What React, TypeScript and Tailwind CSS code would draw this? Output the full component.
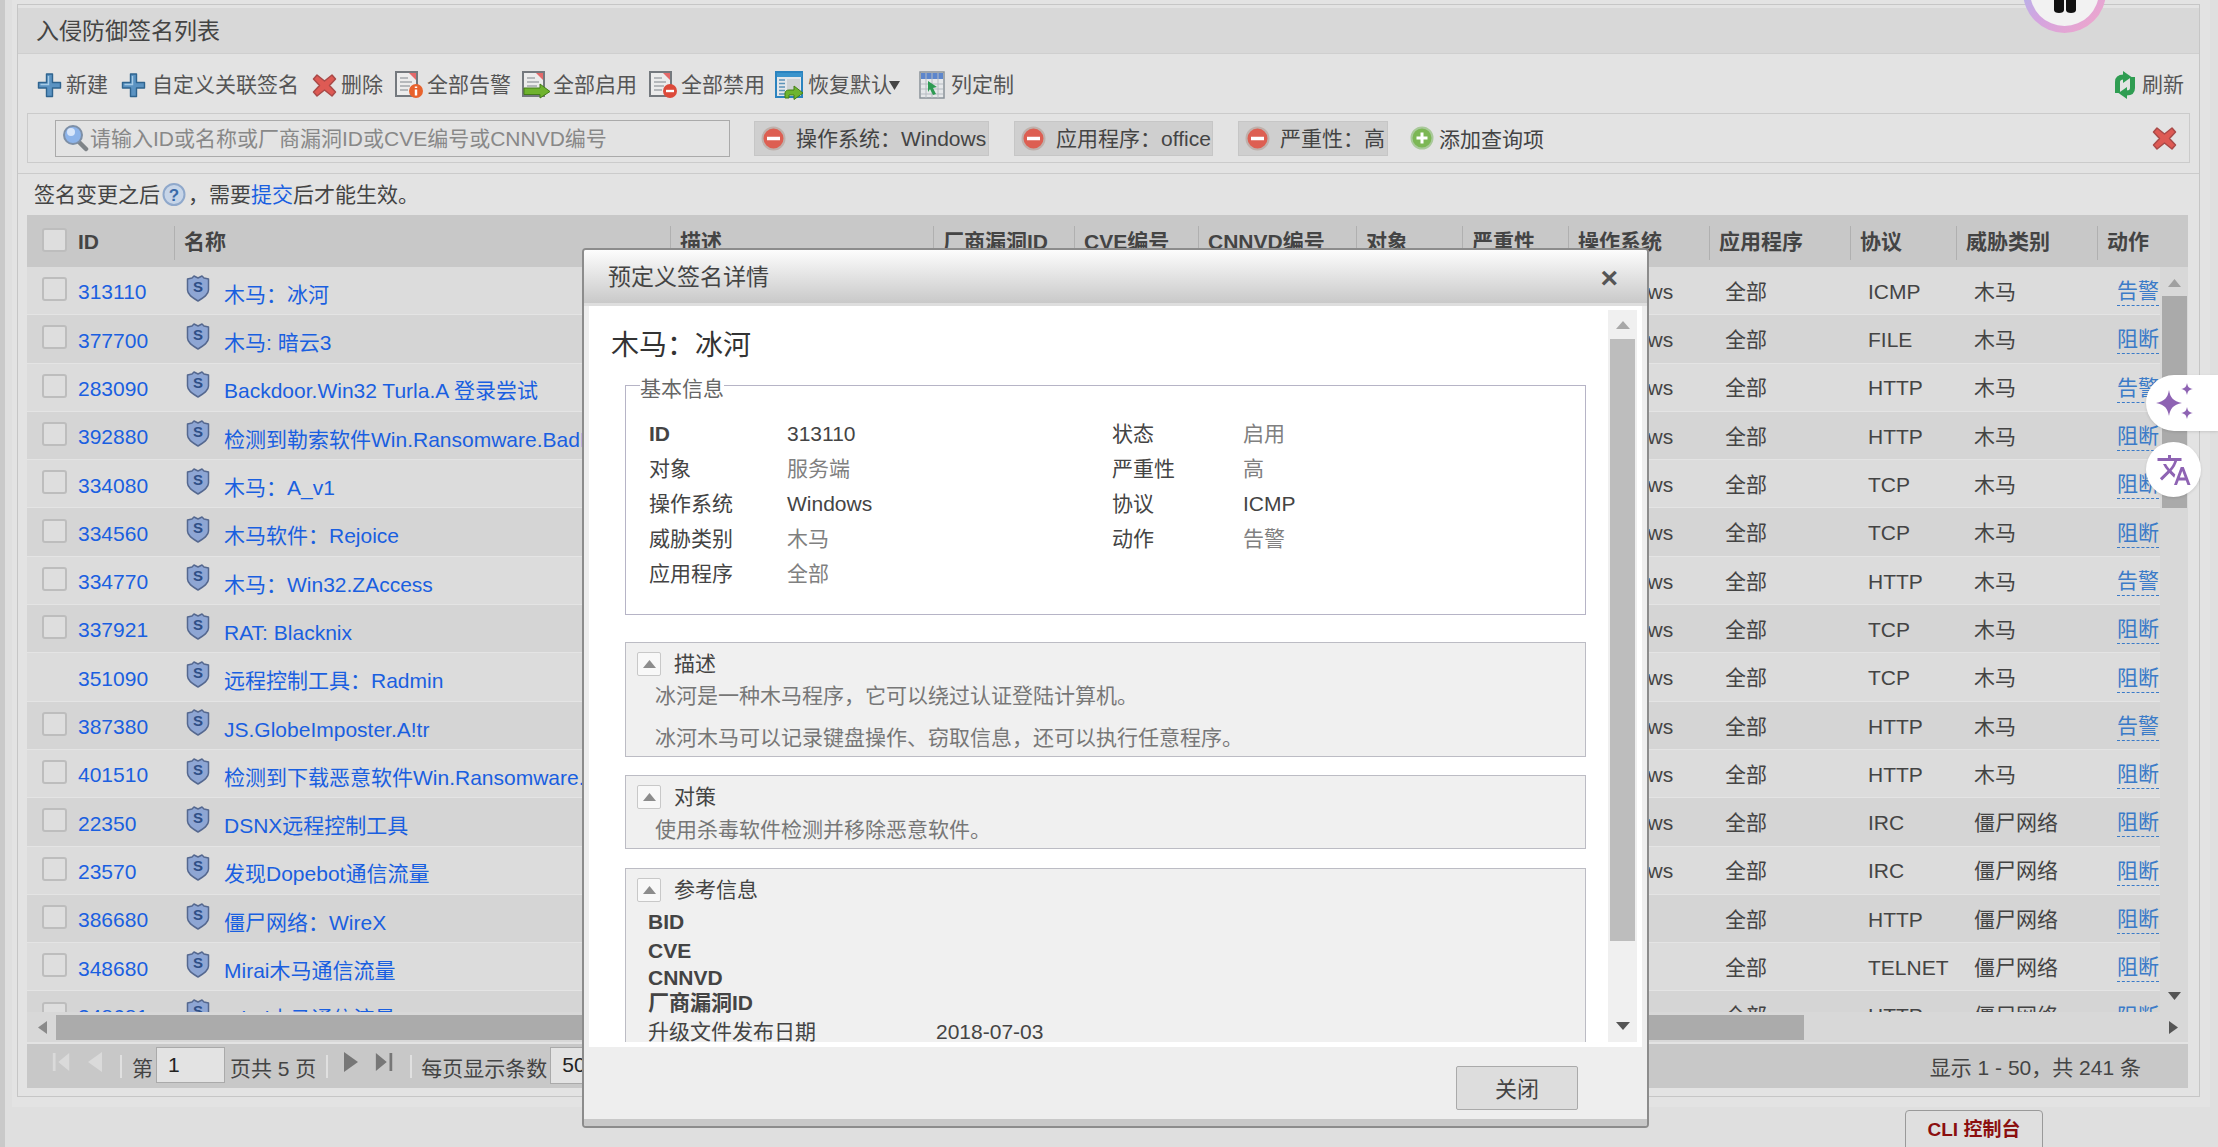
const columns = "grid-cols-[147px_496px_263px_141px_124px_158px_106px_106px_141px_141px_106px_141px_63px]";

const headers = ["名称", "描述", "厂商漏洞ID", "CVE编号", "CNNVD编号", "对象", "严重性", "操作系统", "应用程序", "协议", "威胁类别", "动作"];

type Row = { id: string; name: string; os: string; proto: string; kind: string; action: string; noCheck?: boolean };

const rows: Row[] = [
  { id: "313110", name: "木马：冰河", os: "Windows", proto: "ICMP", kind: "木马", action: "告警" },
  { id: "377700", name: "木马: 暗云3", os: "Windows", proto: "FILE", kind: "木马", action: "阻断" },
  { id: "283090", name: "Backdoor.Win32 Turla.A 登录尝试", os: "Windows", proto: "HTTP", kind: "木马", action: "告警" },
  { id: "392880", name: "检测到勒索软件Win.Ransomware.BadRabbit", os: "Windows", proto: "HTTP", kind: "木马", action: "阻断" },
  { id: "334080", name: "木马：A_v1", os: "Windows", proto: "TCP", kind: "木马", action: "阻断" },
  { id: "334560", name: "木马软件：Rejoice", os: "Windows", proto: "TCP", kind: "木马", action: "阻断" },
  { id: "334770", name: "木马：Win32.ZAccess", os: "Windows", proto: "HTTP", kind: "木马", action: "告警" },
  { id: "337921", name: "RAT: Blacknix", os: "Windows", proto: "TCP", kind: "木马", action: "阻断" },
  { id: "351090", name: "远程控制工具：Radmin", os: "Windows", proto: "TCP", kind: "木马", action: "阻断", noCheck: true },
  { id: "387380", name: "JS.GlobeImposter.A!tr", os: "Windows", proto: "HTTP", kind: "木马", action: "告警" },
  { id: "401510", name: "检测到下载恶意软件Win.Ransomware.Locky", os: "Windows", proto: "HTTP", kind: "木马", action: "阻断" },
  { id: "22350", name: "DSNX远程控制工具", os: "Windows", proto: "IRC", kind: "僵尸网络", action: "阻断" },
  { id: "23570", name: "发现Dopebot通信流量", os: "Windows", proto: "IRC", kind: "僵尸网络", action: "阻断" },
  { id: "386680", name: "僵尸网络：WireX", os: "Linux", proto: "HTTP", kind: "僵尸网络", action: "阻断" },
  { id: "348680", name: "Mirai木马通信流量", os: "Linux", proto: "TELNET", kind: "僵尸网络", action: "阻断" },
  { id: "348681", name: "Mirai木马通信流量", os: "Linux", proto: "HTTP", kind: "僵尸网络", action: "阻断" },
];

function PlusIcon() {
  return (
    <svg width="25" height="26" viewBox="0 0 25 26" className="shrink-0">
      <path d="M9.500 2h6v8.500H23.500v5.500H15.500v8.500h-6V16H1.500v-5.500H9.500z" fill="#5b93c2" stroke="#2f648f" strokeWidth="1.400" strokeLinejoin="round" />
      <path d="M11.500 4v8.500h-8" fill="none" stroke="#a6cbe6" strokeWidth="1.400" />
    </svg>
  );
}

function RedX({ size = 25 }: { size?: number }) {
  return (
    <svg width={size} height={size} viewBox="0 0 25 25" className="shrink-0">
      <path d="M5 2 12.500 8 20 2l3.500 4-6 6.500 6 6.500-3.500 4-7.500-6-7.500 6-3.500-4 6-6.500-6-6.500z" fill="#de5a54" stroke="#a94a48" strokeWidth="1.500" strokeLinejoin="round" />
    </svg>
  );
}

function DocIcon({ badge }: { badge: "info" | "arrow" | "minus" }) {
  return (
    <svg width="29" height="28" viewBox="0 0 29 28" className="shrink-0">
      <path d="M1 1h21v24H1z" fill="#ececec" stroke="#74797e" strokeWidth="2" />
      <path d="M14 2h7v7z" fill="#e4696a" />
      <path d="M5 7h8M5 11h12M5 15h10M5 19h8" stroke="#a2a6aa" strokeWidth="1.500" />
      {badge === "info" && (
        <>
          <circle cx="21" cy="20" r="7" fill="#e8622c" />
          <path d="M21 15.500v1.600M21 18.500v6" stroke="#fff" strokeWidth="2.400" />
        </>
      )}
      {badge === "minus" && (
        <>
          <circle cx="21" cy="20" r="7" fill="#dc4a3a" />
          <path d="M17 20h8" stroke="#fff" strokeWidth="2.400" />
        </>
      )}
      {badge === "arrow" && <path d="M2 17h16v-4l10 7.500-10 6.500v-3.500H2z" fill="#6fb32e" stroke="#447d1a" strokeWidth="1" />}
    </svg>
  );
}

function RestoreIcon() {
  return (
    <svg width="29" height="29" viewBox="0 0 29 29" className="shrink-0">
      <path d="M1 1h26v25H1z" fill="#e4e7ea" stroke="#2a83bf" strokeWidth="2" />
      <path d="M2 2h25v4H2z" fill="#3a94cc" />
      <path d="M4 9h6M4 12.500h6M4 16h6M4 19.500h6M4 23h6" stroke="#5c93b8" strokeWidth="1.600" />
      <path d="M12 8h13v14H12z" fill="#cfd2d5" />
      <path d="M10 27v-5c0-2 2-3 4-3h5v-4l9 7-9 6.500V24h-5v3z" fill="#6db52f" stroke="#437f17" strokeWidth="1" />
    </svg>
  );
}

function ColumnIcon() {
  return (
    <svg width="26" height="29" viewBox="0 0 26 29" className="shrink-0">
      <path d="M1 1h24v26H1z" fill="#e6e8ea" stroke="#8b9299" strokeWidth="1.500" />
      <path d="M2 2h22v6H2z" fill="#5d86cc" />
      <path d="M7 2v25M13 2v25M19 2v25M2 13h22M2 18h22M2 23h22" stroke="#b6bcc2" strokeWidth="1" />
      <path d="M9 10l9 6-4 1 3 6-3 1-3-6-2 3z" fill="#2e9b53" />
    </svg>
  );
}

function RefreshIcon() {
  return (
    <svg width="24" height="28" viewBox="0 0 24 28" className="shrink-0">
      <path d="M4.500 22V11c0-3 2-5 6-5" fill="none" stroke="#2f9d52" strokeWidth="5" />
      <path d="M10 0l8.500 6-8.500 6z" fill="#2f9d52" />
      <path d="M19.500 6v11c0 3-2 5-6 5" fill="none" stroke="#2f9d52" strokeWidth="5" />
      <path d="M14 16l-8.500 6 8.500 6z" fill="#2f9d52" />
    </svg>
  );
}

function SearchIcon() {
  return (
    <svg width="27" height="28" viewBox="0 0 27 28" className="shrink-0">
      <path d="M17 18l7 7" stroke="#7f8488" strokeWidth="4.500" strokeLinecap="round" />
      <circle cx="11" cy="11" r="9" fill="#8db4ea" stroke="#7d8fa6" strokeWidth="2" />
      <circle cx="9" cy="8" r="4" fill="#d8e6fa" />
    </svg>
  );
}

function MinusCircle() {
  return (
    <svg width="25" height="25" viewBox="0 0 25 25" className="shrink-0">
      <circle cx="12.500" cy="12.500" r="11" fill="#dd5f52" stroke="#bfb1ac" strokeWidth="2" />
      <path d="M6 12.500h13" stroke="#fff" strokeWidth="3.500" />
    </svg>
  );
}

function PlusCircle() {
  return (
    <svg width="24" height="24" viewBox="0 0 24 24" className="shrink-0">
      <circle cx="12" cy="12" r="10.500" fill="#7cb755" stroke="#a9c99a" strokeWidth="2" />
      <path d="M6.500 12h11M12 6.500v11" stroke="#fff" strokeWidth="3" />
    </svg>
  );
}

function HelpIcon() {
  return (
    <svg width="24" height="25" viewBox="0 0 24 25" className="mx-[2px] shrink-0">
      <circle cx="12" cy="12.500" r="10.500" fill="#c7d5e8" stroke="#8fa8cb" strokeWidth="2" />
      <text x="12" y="18.500" textAnchor="middle" fontSize="17" fontWeight="700" fill="#3b6aa8" fontFamily="Liberation Sans">?</text>
    </svg>
  );
}

function ShieldIcon() {
  return (
    <svg width="24" height="27" viewBox="0 0 24 27" className="shrink-0">
      <path d="M1.500 4 6 3l2-2 4 2 4-2 2 2 4.500 1v11c0 5-5.500 8-10.500 11C7 23 1.500 20 1.500 15z" fill="#8ea6d4" stroke="#55688f" strokeWidth="1.500" strokeLinejoin="round" />
      <text x="12" y="17" textAnchor="middle" fontSize="15" fontWeight="700" fill="#2f4f86" fontFamily="Liberation Sans">S</text>
    </svg>
  );
}

function Tri({ dir, className }: { dir: "up" | "down" | "left" | "right"; className: string }) {
  const d = { up: "M6 0 12 12H0z", down: "M0 0h12L6 12z", left: "M12 0v12L0 6z", right: "M0 0l12 6-12 6z" }[dir];
  return (
    <svg viewBox="0 0 12 12" preserveAspectRatio="none" className={`shrink-0 ${className}`}>
      <path d={d} fill="currentColor" />
    </svg>
  );
}

function Checkbox() {
  return <span className="-mt-[3px] block h-[24px] w-[25px] shrink-0 rounded-[3px] border-2 border-[#bdbdbd] bg-[#dedede]" />;
}

function ToolItem({ icon, label, className = "" }: { icon: React.ReactNode; label: string; className?: string }) {
  return (
    <div className={`flex items-center text-[#555] ${className}`}>
      {icon}
      <span>{label}</span>
    </div>
  );
}

function Chip({ label, className }: { label: string; className: string }) {
  return (
    <div className={`flex h-[35px] items-center gap-[10px] border border-[#c6c6c6] bg-[#cfcfcf] pl-[6px] text-[#444] ${className}`}>
      <MinusCircle />
      <span className="whitespace-nowrap pt-[2px]">{label}</span>
    </div>
  );
}

function Toggle() {
  return (
    <span className="flex h-[24px] w-[24px] items-center justify-center rounded-[2px] border border-[#c8c8c8] bg-[#f8f8f8] text-[#8c8c8c]">
      <Tri dir="up" className="h-[8px] w-[13px]" />
    </span>
  );
}

function Section({ title, className, children }: { title: string; className: string; children: React.ReactNode }) {
  return (
    <div className={`w-[961px] overflow-hidden border border-[#bcbcc4] bg-[#f0f0f0] ${className}`}>
      <div className="flex h-[41px] items-center gap-[13px] pl-[11px] text-[#444]">
        <Toggle />
        <span>{title}</span>
      </div>
      {children}
    </div>
  );
}

function Info({ label, value, bold, dark }: { label: string; value: string; bold?: boolean; dark?: boolean }) {
  return (
    <>
      <div className={`flex h-[35px] items-center text-[#444] ${bold ? "font-bold" : ""}`}>{label}</div>
      <div className={`flex h-[35px] items-center ${dark ? "text-[#444]" : "text-[#808080]"}`}>{value}</div>
    </>
  );
}

function Modal() {
  return (
    <div className="absolute left-[582px] top-[248px] flex h-[880px] w-[1067px] flex-col overflow-hidden rounded-[4px] border-2 border-[#8c8c8c] bg-[#eeeeee]">
      <div className="flex h-[53px] shrink-0 items-center justify-between bg-gradient-to-b from-[#fdfdfd] to-[#c9c9c9] pl-[24px] pr-[29px] pt-[2px] text-[23px] text-[#444]">
        <span>预定义签名详情</span>
        <span className="text-[30px] font-bold leading-none text-[#555]">×</span>
      </div>
      <div className="h-[3px] shrink-0 bg-[#dedede]" />
      <div className="mx-[5px] flex h-[741px] shrink-0 bg-white pr-[5px] pt-[4px]">
        <div className="h-[732px] w-[1021px] overflow-hidden pl-[36px]">
          <h2 className="-ml-[14px] mt-[16px] text-[28px] leading-[40px] text-[#333]">木马：冰河</h2>
          <fieldset className="mt-[4px] h-[245px] w-[961px] border border-[#b6b4c6]">
            <legend className="ml-[14px] pt-[8px] leading-[22px] text-[#666]">基本信息</legend>
            <div className="mt-[16px] grid grid-cols-[138px_325px_131px_200px] pl-[23px]">
              <Info label="ID" value="313110" bold dark />
              <Info label="状态" value="启用" />
              <Info label="对象" value="服务端" />
              <Info label="严重性" value="高" />
              <Info label="操作系统" value="Windows" dark />
              <Info label="协议" value="ICMP" dark />
              <Info label="威胁类别" value="木马" />
              <Info label="动作" value="告警" />
              <Info label="应用程序" value="全部" />
            </div>
          </fieldset>
          <Section title="描述" className="mt-[27px] h-[115px]">
            <p className="mt-[1px] h-[22px] pl-[29px] leading-[22px] text-[#777]">冰河是一种木马程序，它可以绕过认证登陆计算机。</p>
            <p className="mt-[20px] h-[22px] pl-[29px] leading-[22px] text-[#777]">冰河木马可以记录键盘操作、窃取信息，还可以执行任意程序。</p>
          </Section>
          <Section title="对策" className="mt-[18px] h-[74px]">
            <p className="mt-[1px] h-[24px] pl-[29px] leading-[24px] text-[#777]">使用杀毒软件检测并移除恶意软件。</p>
          </Section>
          <Section title="参考信息" className="mt-[19px] h-[200px]">
            <div className="-mt-[2px] pl-[22px] text-[#444]">
              <div className="flex h-[28px] items-center font-bold">BID</div>
              <div className="flex h-[30px] items-center font-bold">CVE</div>
              <div className="flex h-[24px] items-center font-bold">CNNVD</div>
              <div className="flex h-[26px] items-center font-bold">厂商漏洞ID</div>
              <div className="flex h-[32px] items-center">
                <span className="w-[288px]">升级文件发布日期</span>
                <span>2018-07-03</span>
              </div>
            </div>
          </Section>
        </div>
        <div className="flex h-[732px] w-[29px] shrink-0 flex-col items-center bg-[#f0f0f0] text-[#a8a8a8]">
          <Tri dir="up" className="mt-[11px] h-[8px] w-[14px]" />
          <div className="mt-[10px] h-[602px] w-[25px] bg-[#bdbdbd]" />
          <Tri dir="down" className="mt-[81px] h-[8px] w-[14px] text-[#555]" />
        </div>
      </div>
      <div className="flex flex-1 flex-col">
        <div className="flex flex-1 items-start justify-end pr-[69px] pt-[19px]">
          <button className="flex h-[44px] w-[122px] items-center justify-center rounded-[2px] border border-[#aaaaaa] bg-[#dddddd] pt-[2px] text-[22px] text-[#444]">关闭</button>
        </div>
        <div className="h-[7px] bg-[#c8c8c8]" />
      </div>
    </div>
  );
}

export default function App() {
  return (
    <div className="relative flex h-[1147px] w-[2218px] overflow-hidden bg-[#dfdfdf] font-['Liberation_Sans','Noto_Sans_CJK_SC',sans-serif] text-[21px]">
      <div className="h-full w-[5px] bg-[#c9c9c9]" />
      <div className="ml-[7px] h-[1107px] w-[2198px] bg-[#e3e3e3] pl-[5px] pt-[4px]">
        <div className="h-[1093px] w-[2183px] border border-[#c6c6c6] bg-[#e3e3e3] pt-[3px]">
          <div className="flex h-[46px] items-center border-b border-[#cfcfcf] bg-[#d8d8d8] pl-[18px] pt-[2px] text-[23px] text-[#444]">入侵防御签名列表</div>
          <div className="flex h-[59px] items-center pl-[19px] pr-[15px] pt-[3px]">
            <ToolItem icon={<PlusIcon />} label="新建" className="gap-[4px]" />
            <ToolItem icon={<PlusIcon />} label="自定义关联签名" className="ml-[13px] gap-[6px]" />
            <ToolItem icon={<RedX />} label="删除" className="ml-[13px] gap-[4px]" />
            <ToolItem icon={<DocIcon badge="info" />} label="全部告警" className="ml-[12px] gap-[3px]" />
            <ToolItem icon={<DocIcon badge="arrow" />} label="全部启用" className="ml-[11px] gap-[2px]" />
            <ToolItem icon={<DocIcon badge="minus" />} label="全部禁用" className="ml-[12px] gap-[3px]" />
            <div className="ml-[10px] flex items-center gap-[4px] text-[#555]">
              <RestoreIcon />
              <span>恢复默认</span>
              <Tri dir="down" className="-ml-[7px] h-[9px] w-[11px] text-[#444]" />
            </div>
            <ToolItem icon={<ColumnIcon />} label="列定制" className="ml-[19px] gap-[6px]" />
            <ToolItem icon={<RefreshIcon />} label="刷新" className="ml-auto gap-[5px]" />
          </div>
          <div className="mx-[9px] flex h-[50px] items-center border border-[#cbcbcb] pl-[27px] pr-[12px]">
            <div className="flex h-[37px] w-[675px] items-center gap-[1px] border border-[#aaaaaa] pl-[6px] text-[#888]">
              <SearchIcon />
              <span className="pt-[2px]">请输入ID或名称或厂商漏洞ID或CVE编号或CNNVD编号</span>
            </div>
            <Chip label="操作系统：Windows" className="ml-[24px] w-[235px]" />
            <Chip label="应用程序：office" className="ml-[25px] w-[199px]" />
            <Chip label="严重性：高" className="ml-[25px] w-[150px]" />
            <div className="ml-[22px] flex items-center gap-[5px] text-[#444]">
              <PlusCircle />
              <span className="pt-[3px]">添加查询项</span>
            </div>
            <div className="ml-auto">
              <RedX />
            </div>
          </div>
          <div className="mt-[10px] flex h-[42px] items-center border-t border-[#cbcbcb] pl-[16px] text-[#444]">
            签名变更之后
            <HelpIcon />
            ，需要<span className="text-[#1a5fe0]">提交</span>后才能生效。
          </div>
          <div className="ml-[9px] w-[2161px]">
            <div className={`grid h-[52px] bg-[#c8c8c8] font-bold text-[#444] ${columns}`}>
              <div className="flex items-center gap-[11px] pb-[2px] pl-[15px]">
                <span className="-mt-[3px] block h-[24px] w-[25px] shrink-0 rounded-[3px] border-2 border-[#bdbdbd] bg-[#dedede]" />
                <span>ID</span>
              </div>
              {headers.map((h) => (
                <div key={h} className="my-[11px] flex items-center whitespace-nowrap border-l border-[#b0b0b0] pb-[2px] pl-[9px]">
                  {h}
                </div>
              ))}
            </div>
            <div className="flex h-[745px] overflow-hidden bg-[#d8d8d8]">
              <div className="w-[2133px] shrink-0">
                {rows.map((r, i) => (
                  <div key={r.id} className={`grid h-[48.3px] border-b border-[#e4e4e4] text-[#444] ${columns} ${i % 2 === 0 ? "bg-[#dcdcdc]" : "bg-[#d5d5d5]"}`}>
                    <div className="flex items-center gap-[11px] pl-[15px] text-[#1a5fe0]">
                      {r.noCheck ? <span className="w-[25px]" /> : <Checkbox />}
                      <span className="pt-[3px]">{r.id}</span>
                    </div>
                    <div className="flex items-center gap-[14px] whitespace-nowrap pl-[12px] text-[#1a5fe0]">
                      <span className="-mt-[5px]">
                        <ShieldIcon />
                      </span>
                      <span className="mt-[8px]">{r.name}</span>
                    </div>
                    <div className="col-span-6" />
                    <div className="flex items-center pl-[20px] pt-[2px]">{r.os}</div>
                    <div className="flex items-center pl-[16px] pt-[2px]">全部</div>
                    <div className="flex items-center pl-[18px] pt-[2px]">{r.proto}</div>
                    <div className="flex items-center whitespace-nowrap pl-[18px] pt-[2px]">{r.kind}</div>
                    <div className="flex items-center pl-[20px] pt-[2px] text-[#3b7bc8]">
                      <span className="border-b border-dashed border-[#3b7bc8] leading-[28px]">{r.action}</span>
                    </div>
                  </div>
                ))}
              </div>
              <div className="flex w-[28px] flex-col items-center text-[#a0a0a0]">
                <Tri dir="up" className="mt-[12px] h-[8px] w-[13px]" />
                <div className="mt-[9px] h-[212px] w-[25px] bg-[#aaaaaa]" />
                <Tri dir="down" className="mt-[484px] h-[8px] w-[13px] text-[#555]" />
              </div>
            </div>
            <div className="flex h-[30px] items-center bg-[#d8d8d8] pl-[11px] pr-[10px] text-[#8a8a8a]">
              <Tri dir="left" className="h-[13px] w-[9px]" />
              <div className="ml-[9px] h-[25px] w-[1748px] bg-[#ababab]" />
              <Tri dir="right" className="ml-auto h-[13px] w-[9px] text-[#555]" />
            </div>
            <div className="mt-[2px] flex h-[44px] items-center bg-[#c8c8c8] pl-[24px] pr-[47px] text-[#444]">
              <svg width="20" height="20" viewBox="0 0 20 22" className="-mt-[8px] text-[#dadada]">
                <path d="M1 1h3v20H1zM19 1v20L7 11z" fill="currentColor" />
              </svg>
              <Tri dir="left" className="-mt-[8px] ml-[17px] h-[20px] w-[14px] text-[#dadada]" />
              <span className="ml-[18px] mt-[1px] h-[23px] w-[2px] bg-[#e0e0e0]" />
              <span className="ml-[10px] mt-[6px]">第</span>
              <span className="-mt-[3px] ml-[3px] flex h-[36px] w-[69px] items-center border border-[#aaaaaa] bg-[#e3e3e3] pl-[11px] text-[#222]">1</span>
              <span className="ml-[5px] mt-[6px] whitespace-pre">页共 5 页</span>
              <span className="ml-[10px] mt-[1px] h-[23px] w-[2px] bg-[#e0e0e0]" />
              <Tri dir="right" className="-mt-[8px] ml-[16px] h-[20px] w-[14px] text-[#777]" />
              <svg width="21" height="20" viewBox="0 0 21 22" className="-mt-[8px] ml-[16px] text-[#777]">
                <path d="M1 1v20l12-10zM16 1h3v20h-3z" fill="currentColor" />
              </svg>
              <span className="ml-[15px] mt-[1px] h-[23px] w-[2px] bg-[#e0e0e0]" />
              <span className="ml-[9px] mt-[6px]">每页显示条数</span>
              <span className="-mt-[2px] ml-[3px] flex h-[37px] w-[80px] items-center border border-[#aaaaaa] bg-[#e3e3e3] pl-[11px] text-[#222]">50</span>
              <span className="ml-auto mt-[4px] whitespace-pre">显示 1 - 50，共 241 条</span>
            </div>
          </div>
        </div>
      </div>

      <Modal />

      <div className="absolute left-[1905px] top-[1110px] flex h-[40px] w-[138px] items-center justify-center rounded-t-[4px] border border-[#9a9a9a] bg-[#dfdfdf] text-[19px] font-bold text-[#8b0f0f]">CLI 控制台</div>

      <div className="absolute left-[2023px] -top-[50px] flex h-[83px] w-[83px] justify-center rounded-full bg-gradient-to-br from-[#8fc1f2] via-[#d3a4e0] to-[#f3a6c8] p-[7px]">
        <div className="flex h-full w-full items-end justify-center rounded-full bg-[#f2f2f2] pb-[12px]">
          <svg width="22" height="30" viewBox="0 0 22 30">
            <path d="M0 0h10v26c0 2-2 3-5 3s-5-1-5-3zM12 0h10v26c0 2-2 3-5 3s-5-1-5-3z" fill="#111" />
          </svg>
        </div>
      </div>

      <div className="absolute left-[2146px] top-[375px] flex h-[56px] w-[72px] items-center rounded-l-[28px] bg-white pl-[9px] shadow-[0_1px_3px_rgba(0,0,0,0.12)]">
        <svg width="40" height="40" viewBox="0 0 40 40">
          <path d="M14 7c1.500 8 4 11 13 13-9 2-11.500 5-13 13-1.500-8-4-11-13-13 9-2 11.500-5 13-13z" fill="#8e63b3" />
          <path d="M32 0c.8 4 2 5.200 6 6-4 .8-5.200 2-6 6-.8-4-2-5.200-6-6 4-.8 5.200-2 6-6zM32 24c.8 4 2 5.200 6 6-4 .8-5.200 2-6 6-.8-4-2-5.200-6-6 4-.8 5.200-2 6-6z" fill="#8e63b3" />
        </svg>
      </div>

      <div className="absolute left-[2146px] top-[442px] flex h-[55px] w-[55px] items-center justify-center rounded-full bg-white shadow-[0_1px_3px_rgba(0,0,0,0.12)]">
        <svg width="36" height="36" viewBox="0 0 24 24">
          <path d="M12.870 15.070l-2.540-2.510.030-.030c1.740-1.940 2.980-4.170 3.710-6.530H17V4h-7V2H8v2H1v1.990h11.170C11.500 7.920 10.440 9.750 9 11.350 8.070 10.320 7.300 9.190 6.690 8h-2c.730 1.630 1.730 3.170 2.980 4.560l-5.090 5.020L4 19l5-5 3.110 3.110.760-2.040zM18.500 10h-2L12 22h2l1.120-3h4.750L21 22h2l-4.500-12zm-2.620 7l1.620-4.330L19.120 17h-3.240z" fill="#8e63b3" />
        </svg>
      </div>
    </div>
  );
}
